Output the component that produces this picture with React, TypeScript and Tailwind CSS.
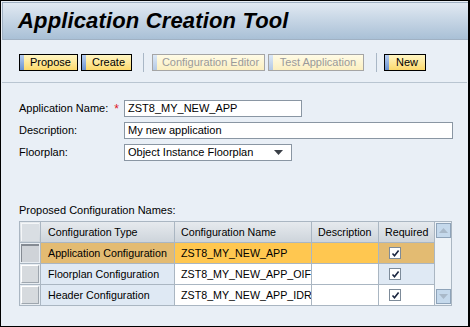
import { ReactNode } from "react";

const font = { fontFamily: '"Liberation Sans", Arial, sans-serif' };

function Btn({
  label,
  width,
  disabled,
}: {
  label: string;
  width: string;
  disabled?: boolean;
}) {
  return (
    <div
      className={`flex h-[17px] ${width} border ${
        disabled
          ? "border-[#a5a5a5] bg-gradient-to-b from-[#fffbe6] to-[#fbefc0] text-[#9a9a9a]"
          : "border-black bg-gradient-to-b from-[#fff6c4] to-[#fcd96a] text-black"
      }`}
    >
      <div
        className={`w-[4px] h-full ${
          disabled
            ? "bg-gradient-to-b from-[#dce8f6] to-[#b4c9e4]"
            : "bg-gradient-to-b from-[#b7cdf0] to-[#6b93d0]"
        }`}
      />
      <div className="flex-1 flex items-center justify-center text-[11px] leading-none">
        {label}
      </div>
    </div>
  );
}

function Sep() {
  return <div className="w-px h-[19px] bg-[#a9b7c6]" />;
}

function Check() {
  return (
    <div className="w-[12px] h-[12px] border border-[#7d8b99] bg-white flex items-center justify-center">
      <svg width="9" height="9" viewBox="0 0 9 9">
        <path
          d="M1.5 4.5 L3.5 6.8 L7.6 1.5"
          fill="none"
          stroke="#1b2640"
          strokeWidth="1.6"
        />
      </svg>
    </div>
  );
}

function Selector({ selected }: { selected?: boolean }) {
  return (
    <div className="w-[21px] h-full border-r border-b border-[#aab6c2] p-[1px] bg-[#e8edf2]">
      <div
        className={`w-full h-full ${
          selected
            ? "border-t-2 border-l border-[#858b93] bg-[#cfd3d8]"
            : "border-t border-l border-white border-r border-b border-r-[#9ea6ae] border-b-[#9ea6ae] bg-[#d6dade]"
        }`}
      />
    </div>
  );
}

function Cell({
  children,
  width,
  bg,
  center,
}: {
  children?: ReactNode;
  width: string;
  bg: string;
  center?: boolean;
}) {
  return (
    <div
      className={`${width} h-full ${bg} border-r border-b border-[#aab6c2] flex items-center ${
        center ? "pl-[10px]" : "pl-[6px]"
      } text-[10.7px] whitespace-nowrap overflow-hidden`}
    >
      {children}
    </div>
  );
}

const rows = [
  {
    type: "Application Configuration",
    name: "ZST8_MY_NEW_APP",
    selected: true,
    typeBg: "bg-[#e3bb72]",
    nameBg: "bg-[#ffc750]",
    reqBg: "bg-[#e3bb72]",
  },
  {
    type: "Floorplan Configuration",
    name: "ZST8_MY_NEW_APP_OIF",
    typeBg: "bg-[#dfe9f4]",
    nameBg: "bg-white",
    reqBg: "bg-[#dfe9f4]",
  },
  {
    type: "Header Configuration",
    name: "ZST8_MY_NEW_APP_IDR",
    typeBg: "bg-[#dfe9f4]",
    nameBg: "bg-white",
    reqBg: "bg-white",
  },
];

export default function App() {
  return (
    <div
      style={font}
      className="w-[470px] h-[327px] border-t border-l border-b border-r-2 border-black bg-[#e9eff6] text-black flex flex-col"
    >
      <div className="mt-[1px] ml-[1px] h-[38px] border-t border-l border-b border-[#a0b1c3] bg-gradient-to-b from-[#e1e9f2] to-[#a9c0d6] flex items-center pl-[15px]">
        <span className="text-[22px] font-bold italic leading-none tracking-[0.15px]">
          Application Creation Tool
        </span>
      </div>

      <div className="flex items-center pl-[18px] pt-[13px] h-[31px]">
        <Btn label="Propose" width="w-[59px]" />
        <div className="w-[3px]" />
        <Btn label="Create" width="w-[51px]" />
        <div className="w-[11px]" />
        <Sep />
        <div className="w-[8px]" />
        <Btn label="Configuration Editor" width="w-[113px]" disabled />
        <div className="w-[3px]" />
        <Btn label="Test Application" width="w-[96px]" disabled />
        <div className="w-[12px]" />
        <Sep />
        <div className="w-[7px]" />
        <Btn label="New" width="w-[42px]" />
      </div>

      <div className="mt-[11px] ml-[1px] mr-[1px] h-px bg-[#b9c5d1]" />

      <div className="flex flex-col gap-[5px] pl-[18px] pt-[17px] text-[11px]">
        <div className="flex items-center h-[17px]">
          <div className="w-[105px] flex items-center">
            Application Name:
            <span className="ml-[6px] text-[#e0141e] text-[12px]">*</span>
          </div>
          <div className="w-[178px] h-[17px] border border-[#8a96a3] bg-white flex items-center pl-[3px]">
            ZST8_MY_NEW_APP
          </div>
        </div>
        <div className="flex items-center h-[17px]">
          <div className="w-[105px]">Description:</div>
          <div className="w-[329px] h-[17px] border border-[#8a96a3] bg-white flex items-center pl-[3px]">
            My new application
          </div>
        </div>
        <div className="flex items-center h-[17px]">
          <div className="w-[105px]">Floorplan:</div>
          <div className="w-[168px] h-[17px] border border-[#8a96a3] bg-white flex items-center pl-[3px] pr-[8px] justify-between">
            <span>Object Instance Floorplan</span>
            <svg width="9" height="5" viewBox="0 0 9 5">
              <path d="M0 0 H9 L4.5 5 Z" fill="#3a3f47" />
            </svg>
          </div>
        </div>
      </div>

      <div className="pl-[18px] pt-[44px] text-[11px] leading-none">
        Proposed Configuration Names:
      </div>

      <div className="ml-[18px] mt-[5px] flex">
        <div className="flex flex-col border-t border-l border-[#aab6c2]">
          <div className="flex h-[21px] bg-gradient-to-b from-[#e6eaee] to-[#ccd3da]">
            <div className="w-[21px] h-full border-r border-b border-[#aab6c2] p-[1px]">
              <div className="w-full h-full border-t border-l border-[#f4f6f8] bg-[#d9dee3]" />
            </div>
            <Cell width="w-[134px]" bg="">
              <span className="pl-px">Configuration Type</span>
            </Cell>
            <Cell width="w-[137px]" bg="">
              Configuration Name
            </Cell>
            <Cell width="w-[67px]" bg="">
              Description
            </Cell>
            <Cell width="w-[56px]" bg="">
              Required
            </Cell>
          </div>
          {rows.map((r) => (
            <div key={r.type} className="flex h-[21px]">
              <Selector selected={r.selected} />
              <Cell width="w-[134px]" bg={r.typeBg}>
                <span className="pl-px">{r.type}</span>
              </Cell>
              <Cell width="w-[137px]" bg={r.nameBg}>
                {r.name}
              </Cell>
              <Cell width="w-[67px]" bg={r.nameBg} />
              <Cell width="w-[56px]" bg={r.reqBg} center>
                <Check />
              </Cell>
            </div>
          ))}
        </div>
        <div className="w-[17px] h-[85px] border-t border-r border-b border-[#aab6c2] bg-[#eef3f8] flex flex-col justify-between py-px pl-[1px]">
          <div className="w-[15px] h-[15px] border border-[#8ea3b9] bg-[#c5d9ec] flex items-center justify-center">
            <svg width="9" height="5" viewBox="0 0 9 5">
              <path d="M0 5 H9 L4.5 0 Z" fill="#a9b9c9" />
            </svg>
          </div>
          <div className="w-[15px] h-[15px] border border-[#8ea3b9] bg-[#c5d9ec] flex items-center justify-center">
            <svg width="9" height="5" viewBox="0 0 9 5">
              <path d="M0 0 H9 L4.5 5 Z" fill="#a9b9c9" />
            </svg>
          </div>
        </div>
      </div>
    </div>
  );
}
